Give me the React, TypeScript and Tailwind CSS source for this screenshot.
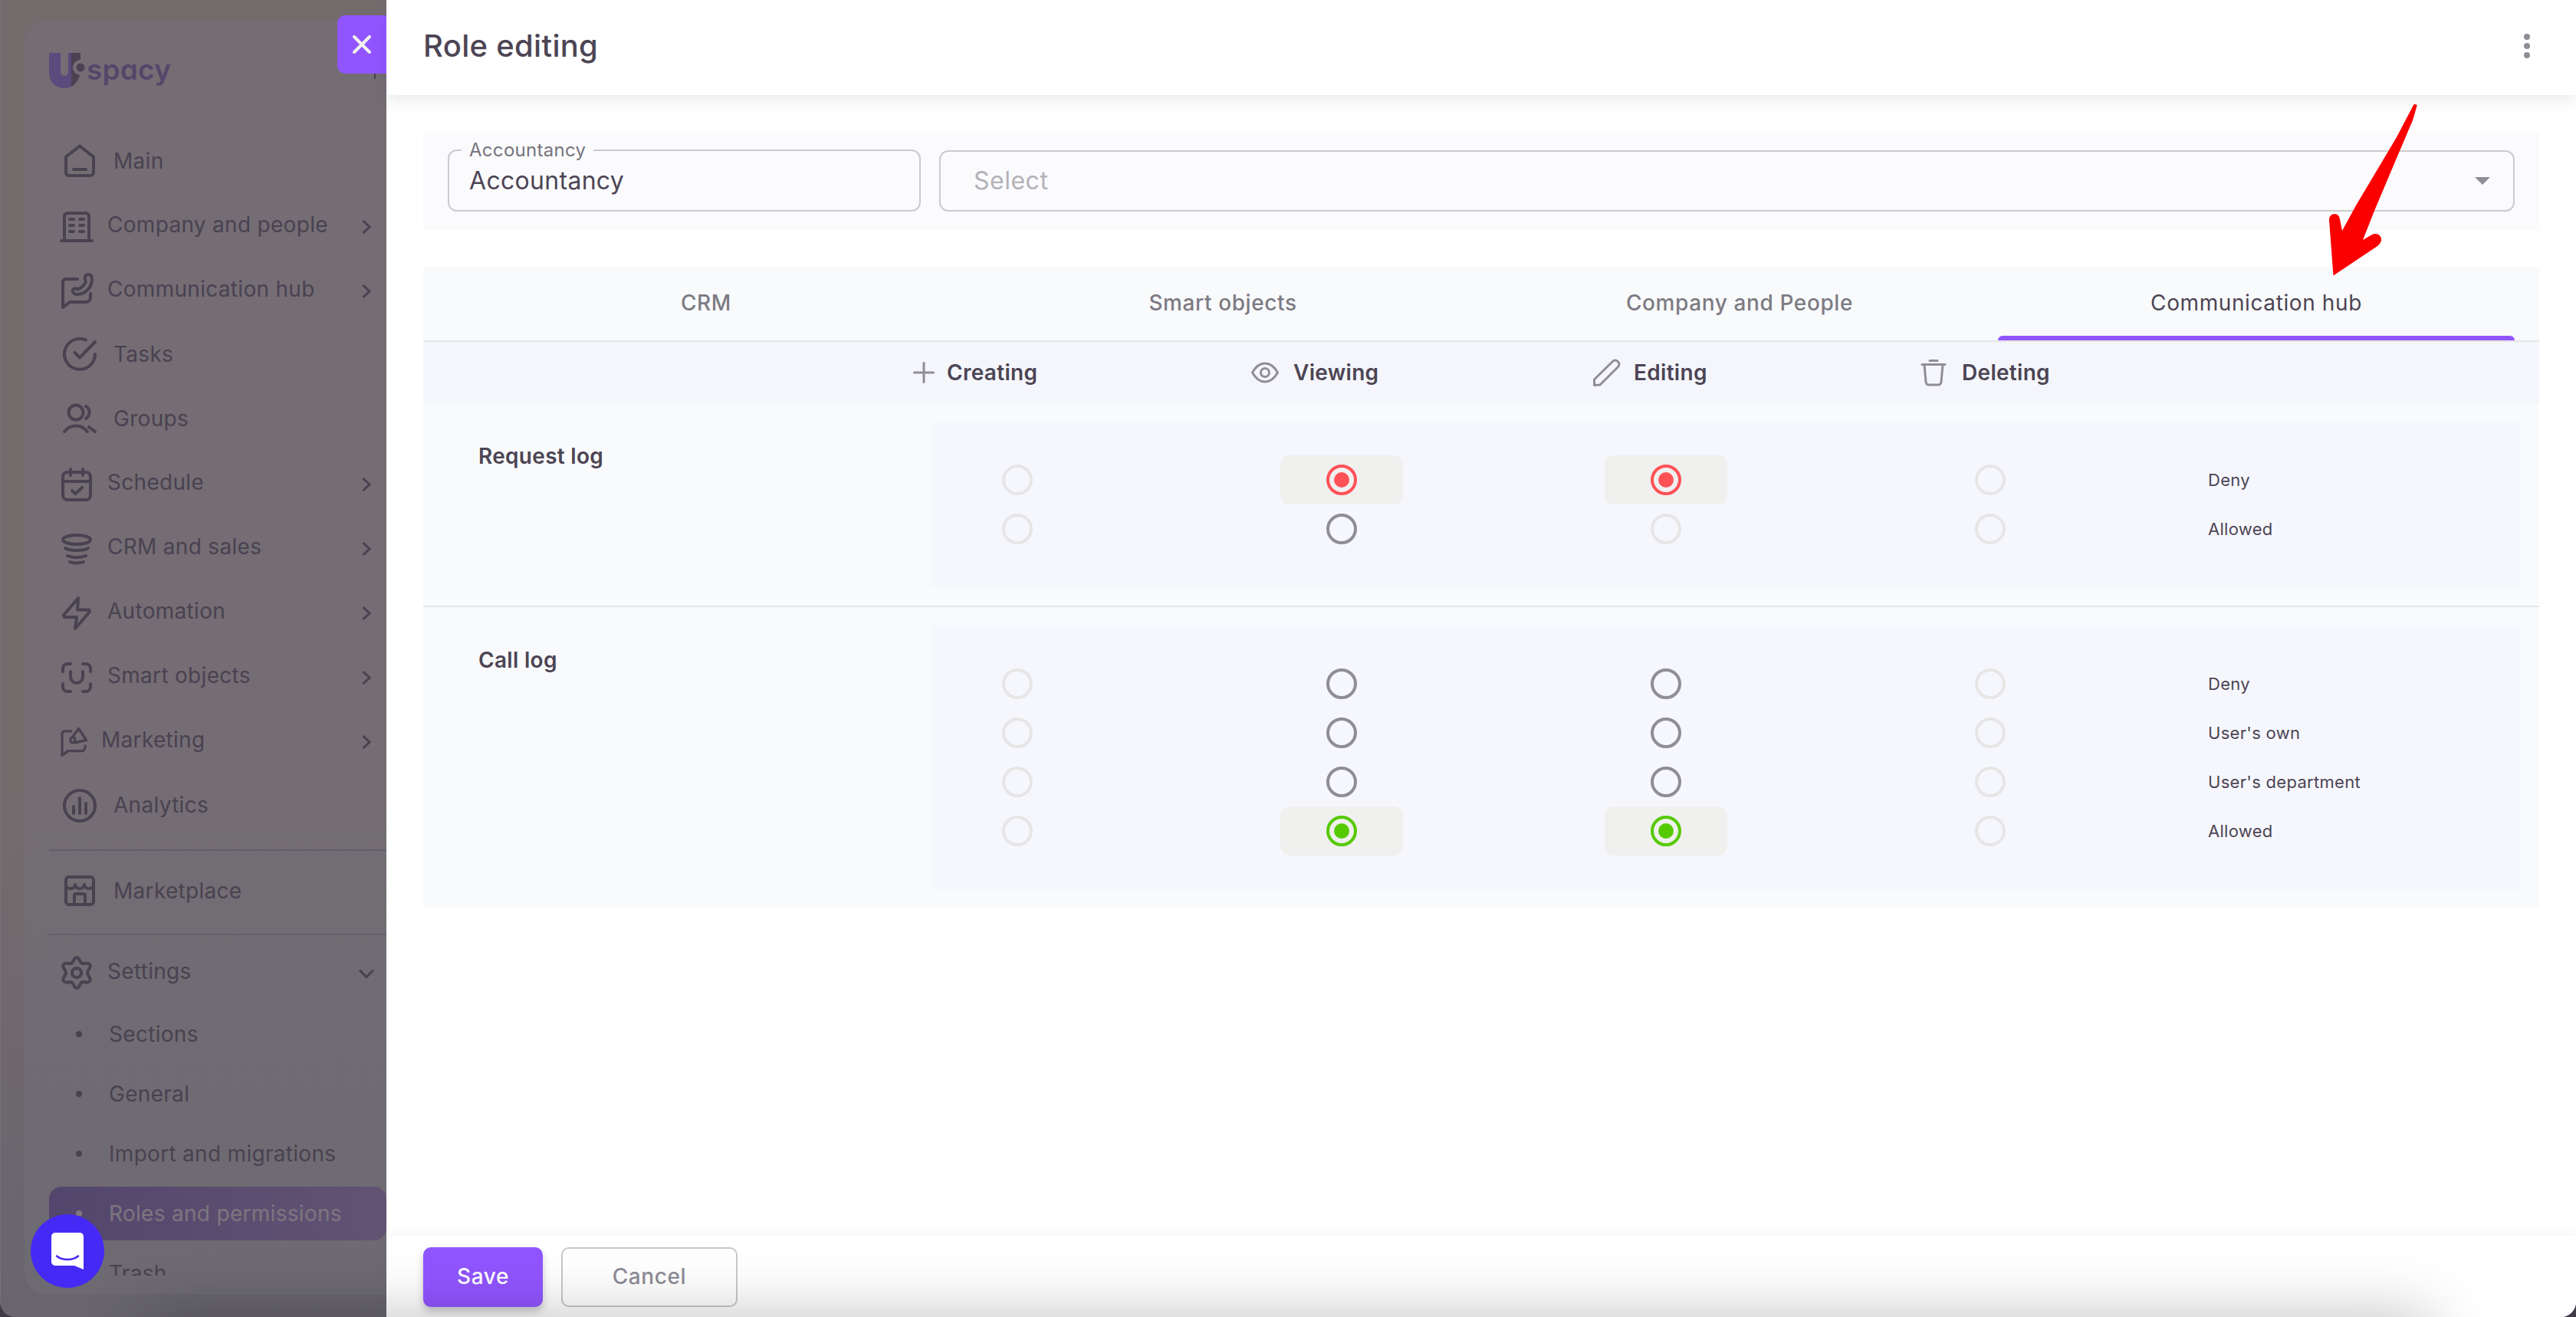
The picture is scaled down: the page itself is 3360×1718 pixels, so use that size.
import { ReactNode } from "react";

type RadioState = "disabled" | "off" | "deny" | "allow";

interface PermissionRow {
  label: string;
  cells: RadioState[];
}

interface PermissionGroup {
  title: string;
  rows: PermissionRow[];
}

interface MenuItem {
  label: string;
  icon: ReactNode;
  expandable?: boolean;
}

const Icon = ({ children, className = "w-12 h-12" }: { children: ReactNode; className?: string }) => (
  <svg
    viewBox="0 0 48 48"
    fill="none"
    stroke="currentColor"
    strokeWidth="4"
    strokeLinecap="round"
    strokeLinejoin="round"
    className={`shrink-0 ${className}`}
  >
    {children}
  </svg>
);

const menu: MenuItem[] = [
  {
    label: "Main",
    icon: (
      <Icon>
        <path d="M6 18.500 L24 4.500 L42 18.500 V39 a4 4 0 0 1 -4 4 H10 a4 4 0 0 1 -4 -4 Z M16 35 H32" />
      </Icon>
    ),
  },
  {
    label: "Company and people",
    expandable: true,
    icon: (
      <Icon>
        <path d="M8 42 V10 a4 4 0 0 1 4 -4 H36 a4 4 0 0 1 4 4 V42 M4 42 H44 M15 14 H20 M28 14 H33 M15 22 H20 M28 22 H33 M15 30 H20 M28 30 H33" />
      </Icon>
    ),
  },
  {
    label: "Communication hub",
    expandable: true,
    icon: (
      <Icon>
        <path d="M25 8 H10 a4 4 0 0 0 -4 4 V45 L15 38 H36 a6 6 0 0 0 6 -6 V27" />
        <path d="M35 9 C34 5 36 2 39 2 C43 2 44 6 44 9 C43 20 35 28 24 28 C20 28 18 25 19 22 C20 20 23 20 25 21.500 C30 20 34 16 36 11" />
      </Icon>
    ),
  },
  {
    label: "Tasks",
    icon: (
      <Icon>
        <path d="M32 5.500 A20 20 0 1 0 44 24 M17.500 22 L24 28.500 L44 8" />
      </Icon>
    ),
  },
  {
    label: "Groups",
    icon: (
      <Icon>
        <circle cx="19" cy="16" r="9.500" />
        <path d="M32 8 C38 11 38 20 32 24 M4 41 C12 31 26 31 34 41 M36 35 L44 41" />
      </Icon>
    ),
  },
  {
    label: "Schedule",
    expandable: true,
    icon: (
      <Icon>
        <path d="M12 8 H36 a6 6 0 0 1 6 6 V38 a6 6 0 0 1 -6 6 H12 a6 6 0 0 1 -6 -6 V14 a6 6 0 0 1 6 -6 Z M6 20 H42 M16 4 V12 M32 4 V12 M18 32 L22.500 36 L31 28" />
      </Icon>
    ),
  },
  {
    label: "CRM and sales",
    expandable: true,
    icon: (
      <Icon>
        <ellipse cx="24" cy="12" rx="18" ry="6" />
        <path d="M9 23 C16 27 32 27 39 23 M12 33 C19 36 29 36 36 33 M15 41 C20 43 28 43 33 41" />
      </Icon>
    ),
  },
  {
    label: "Automation",
    expandable: true,
    icon: (
      <Icon>
        <path d="M26 4 L7 26.500 L8 29 H24 L22 44 L41 22 L40 19.500 H25 Z" />
      </Icon>
    ),
  },
  {
    label: "Smart objects",
    expandable: true,
    icon: (
      <Icon>
        <path d="M6 16 V12 a6 6 0 0 1 6 -6 H16 M32 6 H36 a6 6 0 0 1 6 6 V16 M42 32 V36 a6 6 0 0 1 -6 6 H32 M16 42 H12 a6 6 0 0 1 -6 -6 V32 M16 16 V23 a8 8 0 0 0 16 0 V16" />
      </Icon>
    ),
  },
  {
    label: "Marketing",
    expandable: true,
    icon: (
      <Icon className="w-10 h-10">
        <path d="M20 7 H10 a4 4 0 0 0 -4 4 V45 L15 38 H36 a6 6 0 0 0 6 -6 V30" />
        <path d="M32 3 L44 21 L25 25 C18 26 17 18 22 16.500 Z M25 17 L27 24" />
      </Icon>
    ),
  },
  {
    label: "Analytics",
    icon: (
      <Icon>
        <circle cx="24" cy="25" r="20" />
        <path d="M16 26 V35 M24 15 V35 M32 22 V35" />
      </Icon>
    ),
  },
];

const marketplace: MenuItem = {
  label: "Marketplace",
  icon: (
    <Icon>
      <rect x="6" y="6" width="36" height="36" rx="4" />
      <path d="M6 16 C7 23 17 23 18 16 C19 23 29 23 30 16 C31 23 41 23 42 16 M17 42 V30 a2 2 0 0 1 2 -2 H29 a2 2 0 0 1 2 2 V42" />
    </Icon>
  ),
};

const settingsIcon = (
  <Icon>
    <circle cx="24" cy="23" r="6" />
    <path d="M24 3 C28 3 28 11 32 11 C35 11 39 9 41 12 C44 16 38 19 38 23 C38 27 44 30 41 34 C39 37 35 35 32 35 C28 35 28 43 24 43 C20 43 20 35 16 35 C13 35 9 37 7 34 C4 30 10 27 10 23 C10 19 4 16 7 12 C9 9 13 11 16 11 C20 11 20 3 24 3 Z" />
  </Icon>
);

const subItems = ["Sections", "General", "Import and migrations", "Roles and permissions", "Trash"];

const tabs = ["CRM", "Smart objects", "Company and People", "Communication hub"];

const groups: PermissionGroup[] = [
  {
    title: "Request log",
    rows: [
      { label: "Deny", cells: ["disabled", "deny", "deny", "disabled"] },
      { label: "Allowed", cells: ["disabled", "off", "disabled", "disabled"] },
    ],
  },
  {
    title: "Call log",
    rows: [
      { label: "Deny", cells: ["disabled", "off", "off", "disabled"] },
      { label: "User's own", cells: ["disabled", "off", "off", "disabled"] },
      { label: "User's department", cells: ["disabled", "off", "off", "disabled"] },
      { label: "Allowed", cells: ["disabled", "allow", "allow", "disabled"] },
    ],
  },
];

const radioColor: Record<RadioState, string> = {
  disabled: "text-[#e6e6e6]",
  off: "text-[#8f8d96]",
  deny: "text-[#ff5257]",
  allow: "text-[#56ca00]",
};

function Radio({ state }: { state: RadioState }) {
  const checked = state === "deny" || state === "allow";
  return (
    <div
      className={`w-40 h-16 rounded-xl flex items-center justify-center ${
        checked ? "bg-[#f0f0ef]" : ""
      } ${radioColor[state]}`}
    >
      <span className="w-10 h-10 rounded-full border-4 border-current flex items-center justify-center">
        {checked && <span className="w-5 h-5 rounded-full bg-current" />}
      </span>
    </div>
  );
}

function MenuRow({ item }: { item: MenuItem }) {
  if (!item.expandable) {
    return (
      <div className="h-[84px] flex items-center pl-4">
        {item.icon}
        <span className="ml-5">{item.label}</span>
      </div>
    );
  }
  return (
    <div className="h-[84px] flex items-center pl-3">
      <span className="pt-1">{item.icon}</span>
      <span className="ml-4 -mt-0.5">{item.label}</span>
      <svg viewBox="0 0 12 18" fill="none" stroke="currentColor" strokeWidth="3" className="w-3 h-[18px] ml-auto mt-1 mr-5">
        <path d="M1.500 1 L10 9 L1.500 17" />
      </svg>
    </div>
  );
}

function Logo() {
  return (
    <div className="flex items-start">
      <svg viewBox="0 0 48 48" className="w-12 h-12">
        <path d="M0 0 H15 V25 a5 5 0 0 0 10 0 V0 H41 V8.500 C34 10 31 14 31 19 C31 24 34 28 40 29 C37 40 30 46 20 46 C8 46 0 37 0 26 Z" fill="#5b4a7c" />
        <path d="M29 0 H41 V8.500 C34 10 31 14 31 19 C31 24 34 28 40 29 C38 36 34 41 29 44 Z" fill="#4a4252" />
        <circle cx="41" cy="19" r="5.500" fill="#4a4252" />
      </svg>
      <span className="ml-px text-[37px] leading-[44px] font-semibold tracking-[0.2px] text-[#54466b] [font-feature-settings:'cv11']">
        spacy
      </span>
    </div>
  );
}

function Sidebar() {
  return (
    <aside className="relative w-[504px] h-full shrink-0 overflow-hidden bg-gradient-to-b from-[#746b6d] from-60% to-[#68656e] border-l border-[#777179] pl-[31px] pt-7 text-[28px] leading-9 tracking-[0.3px] text-[#494250]">
      <div className="h-[1660px] rounded-l-[28px] bg-gradient-to-b from-[#746d74] from-60% to-[#6d6a72] pl-8 pt-[41px] overflow-hidden">
        <div className="h-[99px]">
          <Logo />
        </div>
        <nav>
          {menu.map((item) => (
            <MenuRow key={item.label} item={item} />
          ))}
          <div className="mt-4 border-t-2 border-[#645d6d] pt-[10px] pb-[14px]">
            <MenuRow item={marketplace} />
          </div>
          <div className="border-t-2 border-[#645d6d] pt-[13px]">
            <div className="h-[74px] rounded-l-2xl bg-[#6f6c74] flex items-center pl-3">
              {settingsIcon}
              <span className="ml-4 -mt-1.5">Settings</span>
              <svg viewBox="0 0 20 12" fill="none" stroke="currentColor" strokeWidth="3" className="w-5 h-3 ml-auto mr-4">
                <path d="M1 1.500 L10 10.500 L19 1.500" />
              </svg>
            </div>
          </div>
          <div className="h-[357px] pt-[7px] flex flex-col gap-2 overflow-hidden">
            {subItems.map((label) => (
              <div
                key={label}
                className={`h-[70px] shrink-0 flex items-center pl-[35px] ${
                  label === "Roles and permissions"
                    ? "rounded-2xl bg-gradient-to-r from-[#53466c] to-[#625373] text-[#7d767f]"
                    : ""
                }`}
              >
                <span className="w-2 h-2 rounded-full bg-current" />
                <span className="ml-[35px]">{label}</span>
              </div>
            ))}
          </div>
        </nav>
      </div>

      <span className="absolute right-3.5 top-24 w-0.5 h-[7px] bg-[#494250]" />
      <button className="absolute right-0 top-5 w-16 h-[76px] rounded-l-[10px] bg-[#9155ff] flex items-center justify-center">
        <svg viewBox="0 0 24 24" stroke="#f3f2ee" strokeWidth="4" strokeLinecap="round" className="w-6 h-6">
          <path d="M2 2 L22 22 M22 2 L2 22" />
        </svg>
      </button>
    </aside>
  );
}

function ActionHeader() {
  return (
    <div className="h-20 bg-[#f5f6fc] flex items-center text-[28px] font-semibold tracking-[0.3px] text-[#8f8d96]">
      <div className="ml-[639px] w-[441px] flex items-center gap-4">
        <svg viewBox="0 0 28 28" stroke="currentColor" strokeWidth="3" strokeLinecap="round" className="w-7 h-7">
          <path d="M14 1.500 V26.500 M1.500 14 H26.500" />
        </svg>
        <span className="text-[#4c4554]">Creating</span>
      </div>
      <div className="w-[446px] flex items-center gap-[19px]">
        <svg viewBox="0 0 36 28" fill="none" stroke="currentColor" strokeWidth="3" className="w-9 h-7">
          <path d="M1.500 14 C6 6 12 2 18 2 C24 2 30 6 34.500 14 C30 22 24 26 18 26 C12 26 6 22 1.500 14 Z" />
          <circle cx="18" cy="14" r="5.500" />
        </svg>
        <span className="text-[#4c4554]">Viewing</span>
      </div>
      <div className="w-[427px] flex items-center gap-[17px]">
        <svg viewBox="0 0 36 36" fill="none" stroke="currentColor" strokeWidth="3" strokeLinejoin="round" className="w-9 h-9">
          <path d="M1.500 34.500 V27 L26 3 C30 0 36 5 33 10 L9 34 Z" />
        </svg>
        <span className="text-[#4c4554]">Editing</span>
      </div>
      <div className="flex items-center gap-5">
        <svg viewBox="0 0 34 36" fill="none" stroke="currentColor" strokeWidth="3" strokeLinecap="round" className="w-[34px] h-9">
          <path d="M12 2.500 H22 M2 7.500 H32 M5 8 L7 30 a4 4 0 0 0 4 4 H23 a4 4 0 0 0 4 -4 L29 8" />
        </svg>
        <span className="text-[#4c4554]">Deleting</span>
      </div>
    </div>
  );
}

function Drawer() {
  return (
    <main className="relative flex-1 h-full flex flex-col bg-white text-[#4c4554]">
      <header className="h-[124px] shrink-0 flex items-center justify-between pl-12 pr-[60px] pb-1 shadow-[0_6px_20px_rgba(76,78,100,0.12)]">
        <h1 className="text-[40px] font-medium tracking-[0.3px]">Role editing</h1>
        <div className="flex flex-col gap-1 text-[#8f8d96]">
          <span className="w-2 h-2 rounded-full bg-current" />
          <span className="w-2 h-2 rounded-full bg-current" />
          <span className="w-2 h-2 rounded-full bg-current" />
        </div>
      </header>

      <div className="flex-1 px-12 pt-12">
        <section className="h-32 bg-[#fbfbfe] px-8 flex items-center gap-6">
          <fieldset className="w-[617px] h-[90px] -mt-2.5 border-2 border-[#cbcbcd] rounded-xl px-4">
            <legend className="px-[10px] text-2xl leading-5 tracking-[0.3px] text-[#76747c]">Accountancy</legend>
            <div className="pl-[10px] pt-2.5 text-[32px] leading-10 tracking-[0.3px]">Accountancy</div>
          </fieldset>
          <div className="flex-1 h-20 border-2 border-[#cbcbcd] rounded-xl flex items-center justify-between pl-[43px] pr-[30px]">
            <span className="text-[32px] tracking-[0.5px] text-[#b3b2b7]">Select</span>
            <svg viewBox="0 0 20 10" fill="#8f8d96" className="w-5 h-2.5">
              <path d="M0 0 H20 L10 10 Z" />
            </svg>
          </div>
        </section>

        <section className="mt-12 bg-[#f9fafc]">
          <div className="h-[98px] px-8 flex border-b-2 border-[#e4e4e7]">
            {tabs.map((tab) => (
              <div
                key={tab}
                className={`flex-1 flex items-center justify-center pb-0.5 text-[28px] relative ${
                  tab === "Communication hub" ? "tracking-[0.6px]" : "font-medium tracking-[0.6px] text-[#7d7b83]"
                }`}
              >
                {tab}
                {tab === "Communication hub" && (
                  <span className="absolute left-0 right-0 bottom-0 h-1.5 rounded-t-md bg-[#9155ff]" />
                )}
              </div>
            ))}
          </div>

          <ActionHeader />

          {groups.map((group, i) => (
            <div key={group.title} className={`flex py-6 pr-6 ${i > 0 ? "border-t-2 border-[#e4e5e9]" : ""}`}>
              <div className="w-[663px] pl-[72px] pt-6 text-[28px] leading-[42px] font-semibold tracking-[0.3px]">
                {group.title}
              </div>
              <div className="flex-1 bg-[#f6f7fd] py-11 pl-8">
                {group.rows.map((row) => (
                  <div key={row.label} className="flex items-center">
                    <div className="flex gap-[263px]">
                      {row.cells.map((state, j) => (
                        <Radio key={j} state={state} />
                      ))}
                    </div>
                    <span className="ml-[204px] text-[22px] tracking-[0.3px]">{row.label}</span>
                  </div>
                ))}
              </div>
            </div>
          ))}
        </section>
      </div>

      <footer className="h-[106px] shrink-0 px-12 pt-[15px] flex gap-6 text-[28px] font-medium tracking-[0.6px] leading-9 shadow-[0_-4px_16px_rgba(76,78,100,0.05)] bg-white">
        <button className="w-[156px] h-[78px] pb-0.5 rounded-[10px] bg-[#9155ff] text-white shadow-[0_6px_10px_rgba(58,53,65,0.25)]">
          Save
        </button>
        <button className="w-[230px] h-[78px] pb-0.5 rounded-[10px] border-2 border-[#c8c7cb] text-[#8f8d96]">Cancel</button>
      </footer>

      {/* pointer to the active tab */}
      <svg viewBox="0 0 120 230" fill="#fb0000" className="absolute right-[203px] top-[133px] w-[120px] h-[230px]">
        <path d="M111 4 C112 2 116 3 115.500 5 L110 24 L87 78 L60 142 L45 180 L57 173 C65 169 73 177 67 185 L64 188 L6.500 226.500 L1 154 C1 144 14 143 15 153 L18 168 L36 135 L64 88 L89 46 Z" />
      </svg>
    </main>
  );
}

export default function App() {
  return (
    <div className="w-full h-[1718px] overflow-hidden bg-[#3f3a46] font-['Inter',sans-serif]">
      <div className="relative w-full h-full flex overflow-hidden rounded-b-[20px]">
        <Sidebar />
        <Drawer />
        {/* soft shade rising from the bottom edge of the window */}
        <div className="pointer-events-none absolute left-[190px] right-[190px] -bottom-40 h-40 shadow-[0_0_82px_rgba(0,0,0,0.25)]" />
        <button className="absolute left-10 bottom-[38px] w-24 h-24 rounded-full bg-[#452af5] flex items-center justify-center">
          <svg viewBox="0 0 42 48" className="w-[42px] h-12">
            <path d="M5 0 H37 a5 5 0 0 1 5 5 V48 L30 43 H5 a5 5 0 0 1 -5 -5 V5 a5 5 0 0 1 5 -5 Z" fill="#fff" />
            <path d="M7 30.500 C14 36.500 28 36.500 35 30.500" fill="none" stroke="#452af5" strokeWidth="2.500" strokeLinecap="round" />
          </svg>
        </button>
      </div>
    </div>
  );
}
